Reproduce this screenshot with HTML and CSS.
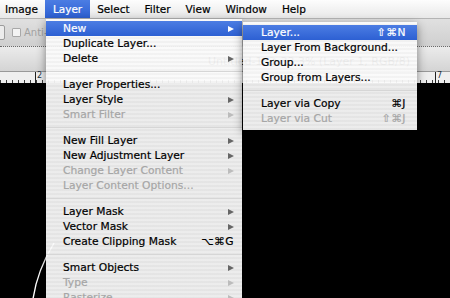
FILE: index.html
```html
<!DOCTYPE html>
<html lang="en">
<head>
    <meta charset="UTF-8">
    <meta name="viewport" content="width=device-width, initial-scale=1.0">
    <title>Layer menu</title>
    <link rel="stylesheet" href="styles.css">
</head>
<body>
    <div class="menubar">
        <span>Image</span>
        <span class="open">Layer</span>
        <span>Select</span>
        <span>Filter</span>
        <span>View</span>
        <span>Window</span>
        <span>Help</span>
    </div>
    <div class="options">
        <span class="dropdown"></span>
        <label class="check"><span class="box"></span>Anti-alias</label>
    </div>
    <div class="titlebar">Untitled-1 @ 33.3% (Layer 1, RGB/8)</div>
    <div class="ruler">
        <span class="mark">2</span>
        <span class="mark">7</span>
    </div>
    <div class="canvas">
        <svg class="shape" width="450" height="215" viewBox="0 0 450 215">
            <path d="M33 216 Q37 188 54 160" fill="none" stroke="#fff" stroke-width="1.4"/>
        </svg>
    </div>

    <ul class="menu main">
        <li class="active">New<span class="arrow"></span></li>
        <li>Duplicate Layer...</li>
        <li>Delete<span class="arrow"></span></li>
        <li class="sep"></li>
        <li>Layer Properties...</li>
        <li>Layer Style<span class="arrow"></span></li>
        <li class="off">Smart Filter<span class="arrow"></span></li>
        <li class="sep"></li>
        <li>New Fill Layer<span class="arrow"></span></li>
        <li>New Adjustment Layer<span class="arrow"></span></li>
        <li class="off">Change Layer Content<span class="arrow"></span></li>
        <li class="off">Layer Content Options...</li>
        <li class="sep"></li>
        <li>Layer Mask<span class="arrow"></span></li>
        <li>Vector Mask<span class="arrow"></span></li>
        <li>Create Clipping Mask<span class="key">⌥⌘G</span></li>
        <li class="sep"></li>
        <li>Smart Objects<span class="arrow"></span></li>
        <li class="off">Type<span class="arrow"></span></li>
        <li class="off">Rasterize<span class="arrow"></span></li>
    </ul>

    <ul class="menu sub">
        <li class="active">Layer...<span class="key">⇧⌘N</span></li>
        <li>Layer From Background...</li>
        <li>Group...</li>
        <li>Group from Layers...</li>
        <li class="sep"></li>
        <li>Layer via Copy<span class="key">⌘J</span></li>
        <li class="off">Layer via Cut<span class="key">⇧⌘J</span></li>
    </ul>
</body>
</html>
```

FILE: styles.css
```css
body {
    margin: 0;
    width: 450px;
    height: 298px;
    overflow: hidden;
    position: relative;
    display: flex;
    flex-direction: column;
    font-family: "DejaVu Sans", sans-serif;
    background-color: #000;
    color: #000;
}
.menubar {
    display: flex;
    height: 18px;
    line-height: 18px;
    font-size: 10.5px;
    -webkit-text-stroke: 0.2px currentColor;
    border-bottom: 1px solid #b4b4b4;
    background: linear-gradient(#fdfdfd, #e8e8e8);
}
.menubar span {
    padding: 0 7.5px;
}
.menubar span:first-child {
    padding-left: 5px;
}
.menubar .open {
    color: #fff;
    background: linear-gradient(#4c7de3, #2d60d3);
}
.options {
    display: flex;
    align-items: center;
    height: 27px;
    border-bottom: 1px dotted #6a6a6a;
    background: linear-gradient(#e0e0e0, #cfcfcf);
}
.dropdown {
    width: 8px;
    height: 13px;
    margin-left: -5px;
    border: 1px solid #9c9c9c;
    border-radius: 2px;
    background: #ececec;
}
.check {
    display: flex;
    align-items: center;
    margin-left: 7px;
    font-size: 10px;
    color: #a2a2a2;
}
.box {
    width: 7px;
    height: 7px;
    margin-right: 3px;
    border: 1px solid #a8a8a8;
    border-radius: 1px;
    background: #f3f3f3;
}
.titlebar {
    height: 16px;
    padding: 8px 40px 0 0;
    line-height: 14px;
    font-size: 11px;
    text-align: right;
    color: #222;
    border-bottom: 1px solid #999;
    background: linear-gradient(#ebebeb, #d4d4d4);
}
.ruler {
    display: flex;
    justify-content: space-between;
    height: 11px;
    padding: 0 8px 0 35px;
    background-color: #efefef;
    background-image: repeating-linear-gradient(to right, #3a3a3a 0 1px, transparent 1px 6px);
    background-size: 100% 3px;
    background-position: 0 100%;
    background-repeat: no-repeat;
}
.mark {
    border-left: 1px solid #222;
    padding-left: 1px;
    font-size: 8px;
    line-height: 8px;
    color: #234;
}
.canvas {
    flex: 1;
    position: relative;
    background: #000;
}
.shape {
    position: absolute;
    left: 0;
    top: 0;
}
.menu {
    position: absolute;
    margin: 0;
    list-style: none;
    font-size: 10.7px;
    -webkit-text-stroke: 0.2px currentColor;
    background: repeating-linear-gradient(rgba(251, 251, 251, 0.94) 0 2px, rgba(243, 243, 243, 0.94) 2px 4px);
    box-shadow: 0 3px 9px rgba(0, 0, 0, 0.45);
}
.menu.main {
    left: 46px;
    top: 19px;
    width: 196px;
    padding: 2px 0 4px;
}
.menu.sub {
    left: 243px;
    top: 22px;
    width: 174px;
    padding: 3px 0 4px;
}
.menu li {
    display: flex;
    justify-content: space-between;
    align-items: center;
    height: 15px;
    line-height: 15px;
    padding: 0 8px 0 17px;
}
.menu.sub li {
    padding: 0 11px 0 18px;
}
.menu li.sep {
    height: 1px;
    margin: 5px 0;
    padding: 0;
    background: #d6d6d6;
}
.menu li.off {
    color: #a6a6a6;
}
.menu li.active {
    color: #fff;
    background: linear-gradient(#4c7de3, #2d60d3);
}
.arrow {
    width: 0;
    height: 0;
    border-left: 6px solid #666;
    border-top: 3.5px solid transparent;
    border-bottom: 3.5px solid transparent;
}
.off .arrow {
    border-left-color: #bcbcbc;
}
.active .arrow {
    border-left-color: #fff;
}
.key {
    letter-spacing: 0.5px;
}
```
